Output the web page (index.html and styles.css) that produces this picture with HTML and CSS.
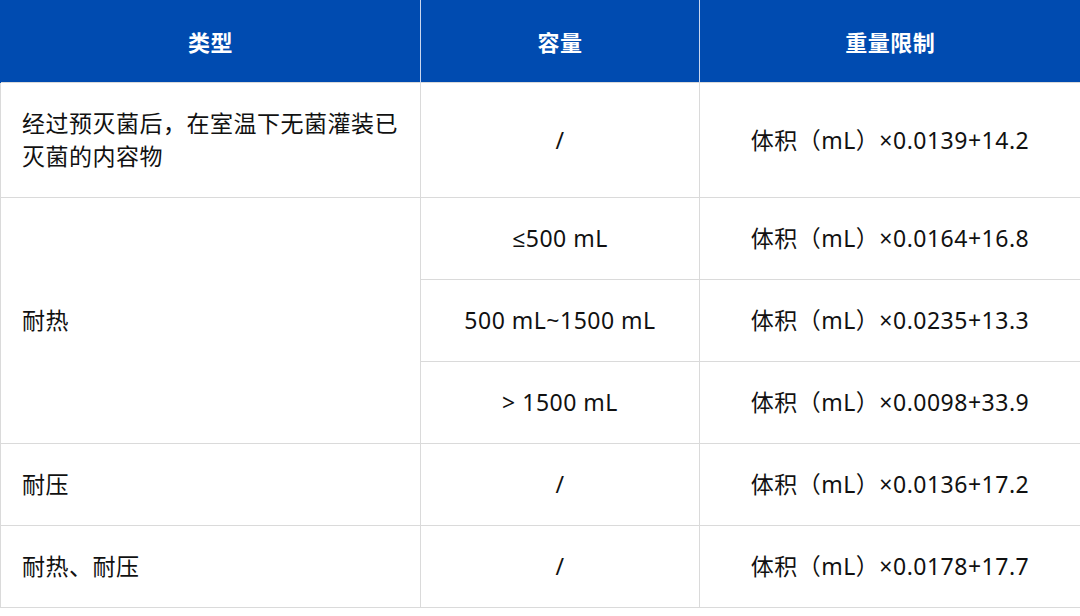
FILE: index.html
```html
<!DOCTYPE html>
<html lang="zh">
<head>
<meta charset="utf-8">
<link rel="stylesheet" href="styles.css">
</head>
<body>
<table class="spec">
  <colgroup>
    <col class="c-type">
    <col class="c-cap">
    <col class="c-lim">
  </colgroup>
  <thead>
    <tr class="head"><th>类型</th><th>容量</th><th>重量限制</th></tr>
  </thead>
  <tbody>
    <tr class="tall">
      <td class="left">经过预灭菌后，在室温下无菌灌装已灭菌的内容物</td>
      <td>/</td>
      <td>体积（mL）×0.0139+14.2</td>
    </tr>
    <tr>
      <td class="left" rowspan="3">耐热</td>
      <td><span class="sym">≤</span>500 mL</td>
      <td>体积（mL）×0.0164+16.8</td>
    </tr>
    <tr>
      <td>500 mL~1500 mL</td>
      <td>体积（mL）×0.0235+13.3</td>
    </tr>
    <tr>
      <td>&gt; 1500 mL</td>
      <td>体积（mL）×0.0098+33.9</td>
    </tr>
    <tr>
      <td class="left">耐压</td>
      <td>/</td>
      <td>体积（mL）×0.0136+17.2</td>
    </tr>
    <tr>
      <td class="left">耐热、耐压</td>
      <td>/</td>
      <td>体积（mL）×0.0178+17.7</td>
    </tr>
  </tbody>
</table>
</body>
</html>
```

FILE: styles.css
```css
html, body {
  margin: 0;
  padding: 0;
  background: #ffffff;
}

.spec {
  width: 1080px;
  border-collapse: collapse;
  table-layout: fixed;
  font-family: "Noto Sans", "Noto Sans CJK SC", sans-serif;
  font-size: 23px;
  letter-spacing: 0.5px;
  color: #111111;
  text-spacing-trim: space-all;
}

.c-type { width: 420px; }
.c-cap { width: 279px; }
.c-lim { width: 381px; }

.spec th {
  background: #004bb0;
  color: #ffffff;
  font-weight: 700;
  height: 82px;
  padding: 0;
  text-align: center;
  border-left: 1px solid #c9d6ef;
  font-size: 22px;
}
.spec th:first-child { border-left: 1px solid #004bb0; }

.spec td {
  height: 81px;
  padding: 0 12px;
  text-align: center;
  vertical-align: middle;
  border: 1px solid #dadada;
  line-height: 33px;
}

.spec tr.tall td { height: 114px; }

.spec td.left {
  text-align: left;
  padding-left: 21px;
  padding-right: 10px;
}

.sym {
  font-family: "Open Sans", "DejaVu Sans", sans-serif;
}
```
